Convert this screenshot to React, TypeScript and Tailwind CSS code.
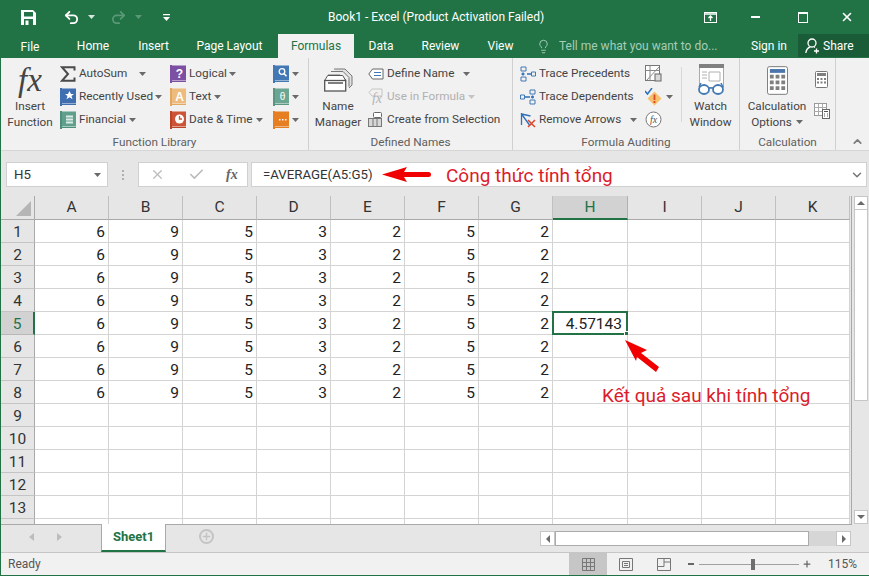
import { Undo2, Redo2, Lightbulb, X, Check, ChevronDown, ChevronUp, Plus } from "lucide-react"

function Caret({ dim = false }: { dim?: boolean }) {
  return (
    <svg width="7" height="4" viewBox="0 0 7 4" className="shrink-0">
      <path d="M0 0h7L3.5 4z" fill={dim ? "#c4c4c4" : "#6a6a6a"} />
    </svg>
  )
}

function Book({ color, spine, children }: { color: string; spine: string; children?: React.ReactNode }) {
  return (
    <svg width="16" height="18" viewBox="0 0 16 18" className="shrink-0">
      <rect x="0" y="0" width="2" height="18" fill={spine} />
      <rect x="2" y="0.5" width="14" height="15" fill={color} />
      <rect x="2" y="16" width="14" height="1" fill={spine} />
      {children}
    </svg>
  )
}

function Sigma() {
  return (
    <svg width="16" height="16" viewBox="0 0 16 16" className="shrink-0">
      <path d="M14.500 4.500V1.200H2L8 8 2 14.800h12.500v-3.300" fill="none" stroke="#4a4a4a" strokeWidth="2" />
    </svg>
  )
}

function RibbonRow({ icon, label, caret, gap, disabled }: { icon: React.ReactNode; label: string; caret?: boolean; gap?: string; disabled?: boolean }) {
  return (
    <div className="flex h-[23px] items-center">
      <div className="flex w-[19px] shrink-0 justify-start">{icon}</div>
      <span className={disabled ? "whitespace-nowrap text-[#b0b0b0]" : "whitespace-nowrap text-[#444]"}>{label}</span>
      {caret && <span className={gap ?? "ml-[3px]"}><Caret dim={disabled} /></span>}
    </div>
  )
}

function LargeButton({ icon, lines, width }: { icon: React.ReactNode; lines: React.ReactNode[]; width: string }) {
  return (
    <div className={"flex flex-col items-center leading-[16px] text-[#444] " + width}>
      <div className="flex h-[39px] items-center justify-center">{icon}</div>
      {lines.map((l, i) => (
        <span key={i} className="flex items-center gap-[4px] whitespace-nowrap">{l}</span>
      ))}
    </div>
  )
}

function GroupLabel({ children }: { children: string }) {
  return <div className="h-[20px] pt-[3px] text-center text-[11.750px] leading-[18px] text-[#5f5f5f]">{children}</div>
}

function Ribbon() {
  return (
    <div className="flex h-[93px] border-b border-[#d6d6d6] bg-[#f1f1f1] text-[11.750px]">
      {/* Function Library */}
      <div className="flex w-[308px] flex-col border-r border-[#d0d0d0]">
        <div className="flex h-[72px] pt-[4px]">
          <LargeButton
            width="w-[58px]"
            icon={<span className="font-['Liberation_Serif',serif] text-[33px] italic leading-[34px] text-[#444]">fx</span>}
            lines={["Insert", "Function"]}
          />
          <div className="w-[111px] pl-[1px]">
            <RibbonRow icon={<Sigma />} label="AutoSum" caret gap="ml-[12px]" />
            <RibbonRow
              icon={
                <Book color="#3f6fb0" spine="#3f6fb0">
                  <path d="M9.500 3l1.500 3h3l-2.500 2 1 3.200-3-2-3 2 1-3.200-2.500-2h3z" fill="#fff" />
                </Book>
              }
              label="Recently Used"
              caret
              gap="ml-[2px]"
            />
            <RibbonRow
              icon={
                <Book color="#5f9f8c" spine="#4e8f7c">
                  <path d="M6 4.500h7v2H6zM6 7.500h7v2H6zM6 10.500h7v2H6z" fill="#dcebe6" />
                </Book>
              }
              label="Financial"
              caret
            />
          </div>
          <div className="w-[103px]">
            <RibbonRow
              icon={
                <Book color="#7d4fa3" spine="#7d4fa3">
                  <text x="9.500" y="13" textAnchor="middle" fontSize="12" fontWeight="700" fill="#fff" fontFamily="Liberation Sans">?</text>
                </Book>
              }
              label="Logical"
              caret
              gap="ml-[2px]"
            />
            <RibbonRow
              icon={
                <Book color="#eebb7c" spine="#e2a85f">
                  <text x="9.500" y="13" textAnchor="middle" fontSize="12" fontWeight="700" fill="#fff" fontFamily="Liberation Sans">A</text>
                </Book>
              }
              label="Text"
              caret
            />
            <RibbonRow
              icon={
                <Book color="#cc5335" spine="#bb4528">
                  <circle cx="9.500" cy="8" r="4.500" fill="#fff" />
                  <path d="M9.500 5v3h2.500" fill="none" stroke="#cc5335" strokeWidth="1.300" />
                </Book>
              }
              label="Date & Time"
              caret
            />
          </div>
          <div className="w-[35px]">
            <div className="flex h-[23px] items-center gap-[3px]">
              <Book color="#4279b5" spine="#4279b5">
                <circle cx="9" cy="6.500" r="2.800" fill="none" stroke="#fff" strokeWidth="1.300" />
                <path d="M11 8.500l2.500 2.800" stroke="#fff" strokeWidth="1.500" />
              </Book>
              <Caret />
            </div>
            <div className="flex h-[23px] items-center gap-[3px]">
              <Book color="#6ba692" spine="#5a9680">
                <text x="9.500" y="12" textAnchor="middle" fontSize="10" fill="#fff" fontFamily="Liberation Sans">θ</text>
              </Book>
              <Caret />
            </div>
            <div className="flex h-[23px] items-center gap-[3px]">
              <Book color="#e67e22" spine="#e67e22">
                <path d="M6 8h1.500v1.500H6zM9 8h1.500v1.500H9zM12 8h1.500v1.500H12z" fill="#fff" />
              </Book>
              <Caret />
            </div>
          </div>
        </div>
        <GroupLabel>Function Library</GroupLabel>
      </div>

      {/* Defined Names */}
      <div className="flex w-[204px] flex-col border-r border-[#d0d0d0]">
        <div className="flex h-[72px] pt-[4px]">
          <LargeButton
            width="w-[58px]"
            icon={
              <svg width="29" height="24" viewBox="0 0 29 24">
                <path d="M10 1h11l7 7v9l-3 3" fill="#e2e2e2" stroke="#777" />
                <path d="M7 3.500h12l6 6v9" fill="#eeeeee" stroke="#777" />
                <path d="M4 7h12l6 5" fill="#f6f6f6" stroke="#777" />
                <path d="M.700 12.500l3-5h15l3 5" fill="#fff" stroke="#555" />
                <rect x=".700" y="12.500" width="21" height="10.500" fill="#fff" stroke="#555" strokeWidth="1.300" />
                <path d="M4 15h15" stroke="#555" strokeWidth="1.500" />
              </svg>
            }
            lines={["Name", "Manager"]}
          />
          <div className="pl-[1px]">
            <RibbonRow
              icon={
                <svg width="16" height="12" viewBox="0 0 16 12">
                  <path d="M4.500 1h10.500v10H4.500L.800 6z" fill="#fff" stroke="#666" />
                  <path d="M6 4.500h7M6 7.500h7" stroke="#4279b5" />
                </svg>
              }
              label="Define Name"
              caret
              gap="ml-[9px]"
            />
            <RibbonRow
              icon={
                <svg width="16" height="17" viewBox="0 0 16 17">
                  <path d="M4 1h10v7H4L1 4.500z" fill="none" stroke="#c6c6c6" />
                  <text x="9" y="15" textAnchor="middle" fontSize="14" fontStyle="italic" fill="#b4b4b4" fontFamily="Liberation Serif">fx</text>
                </svg>
              }
              label="Use in Formula"
              caret
              disabled
            />
            <RibbonRow
              icon={
                <svg width="15" height="15" viewBox="0 0 15 15">
                  <rect x=".500" y="6.500" width="13" height="8" fill="#d7d7d7" stroke="#777" />
                  <path d="M5 6.500v8M9 6.500v8" stroke="#777" />
                  <rect x="5.500" y=".500" width="8" height="5" rx="1" fill="#fff" stroke="#666" />
                </svg>
              }
              label="Create from Selection"
            />
          </div>
        </div>
        <GroupLabel>Defined Names</GroupLabel>
      </div>

      {/* Formula Auditing */}
      <div className="flex w-[227px] flex-col border-r border-[#d0d0d0]">
        <div className="flex h-[72px] pt-[4px]">
          <div className="w-[132px] pl-[7px]">
            <RibbonRow
              icon={
                <svg width="16" height="16" viewBox="0 0 16 16">
                  <path d="M1 1h5v4H1zM1 11h5v4H1zM11.500 6h4v4h-4z" fill="none" stroke="#4279b5" />
                  <path d="M1.500 8h3M3 6.500v3M7 8h4" stroke="#2d6fb8" strokeWidth="1.500" />
                </svg>
              }
              label="Trace Precedents"
            />
            <RibbonRow
              icon={
                <svg width="16" height="16" viewBox="0 0 16 16">
                  <path d="M10 1h5v4h-5zM10 11h5v4h-5zM.500 6h4v4h-4z" fill="none" stroke="#4279b5" />
                  <path d="M11 8h3M12.500 6.500v3M5 8h5" stroke="#2d6fb8" strokeWidth="1.500" />
                </svg>
              }
              label="Trace Dependents"
            />
            <RibbonRow
              icon={
                <svg width="16" height="16" viewBox="0 0 16 16">
                  <path d="M1.500 1v12M1.500 2l9 2M1.500 2l8 11" fill="none" stroke="#2d6fb8" strokeWidth="1.300" />
                  <path d="M8 8l7 7M15 8l-7 7" stroke="#d9472b" strokeWidth="1.500" />
                </svg>
              }
              label="Remove Arrows"
              caret
              gap="ml-[9px]"
            />
          </div>
          <div className="w-[36px]">
            <div className="flex h-[23px] items-center">
              <svg width="17" height="17" viewBox="0 0 17 17">
                <rect x=".500" y=".500" width="14" height="15" fill="#fff" stroke="#777" />
                <path d="M.500 5.500h14M5 .500v15M14 2L2 15" stroke="#888" />
                <rect x="10" y="9" width="6" height="7" fill="#d9d9d9" stroke="#666" />
              </svg>
            </div>
            <div className="flex h-[23px] items-center gap-[4px]">
              <svg width="17" height="18" viewBox="0 0 17 18">
                <path d="M0 3l2.500 3L7 0" fill="none" stroke="#2d6fb8" strokeWidth="1.500" />
                <path d="M9.500 3.500L16.500 10.500 9.500 17.500 2.500 10.500z" fill="#f5c26b" />
                <path d="M9.500 6.500v5.500M9.500 13v2" stroke="#d9472b" strokeWidth="1.800" />
              </svg>
              <Caret />
            </div>
            <div className="flex h-[23px] items-center">
              <svg width="17" height="17" viewBox="0 0 17 17">
                <circle cx="8.500" cy="8.500" r="7.500" fill="#fff" stroke="#777" />
                <text x="8.500" y="12" textAnchor="middle" fontSize="10" fontStyle="italic" fill="#555" fontFamily="Liberation Serif">fx</text>
              </svg>
            </div>
          </div>
          <div className="mt-[5px] h-[55px] w-px bg-[#d8d8d8]" />
          <LargeButton
            width="w-[57px]"
            icon={
              <svg width="30" height="32" viewBox="0 0 30 32">
                <rect x="3.500" y=".500" width="24" height="23" fill="#fff" stroke="#aaa" />
                <rect x="3" y="0" width="25" height="4" fill="#808080" />
                <path d="M13 8h11v9H13zM6 8h5M6 11h5M6 14h5" fill="none" stroke="#b0b0b0" />
                <ellipse cx="8" cy="25.500" rx="5" ry="4.500" fill="#fff" stroke="#4279b5" strokeWidth="1.800" />
                <ellipse cx="22" cy="25.500" rx="5" ry="4.500" fill="#fff" stroke="#4279b5" strokeWidth="1.800" />
                <path d="M13 24h4M3 23l2-4M27 23l-2-4" stroke="#4279b5" strokeWidth="1.500" />
              </svg>
            }
            lines={["Watch", "Window"]}
          />
        </div>
        <GroupLabel>Formula Auditing</GroupLabel>
      </div>

      {/* Calculation */}
      <div className="flex w-[96px] flex-col border-r border-[#d0d0d0]">
        <div className="flex h-[72px] pt-[4px]">
          <LargeButton
            width="w-[74px]"
            icon={
              <svg width="21" height="29" viewBox="0 0 22 30">
                <rect x=".500" y=".500" width="21" height="29" rx="2" fill="#fff" stroke="#777" />
                <rect x="3" y="3" width="16" height="4" fill="#4a76ab" />
                <path d="M3 9h4v4H3zM9 9h4v4H9zM15 9h4v4h-4zM3 15h4v4H3zM9 15h4v4H9zM15 15h4v4h-4zM3 21h4v4H3zM9 21h4v4H9zM15 21h4v4h-4z" fill="#7f7f7f" />
              </svg>
            }
            lines={["Calculation", <>Options <Caret /></>]}
          />
          <div className="flex flex-col items-start pt-[9px]">
            <svg width="13" height="17" viewBox="0 0 13 17" className="ml-[1px]">
              <rect x=".500" y=".500" width="12" height="16" rx="1" fill="#fff" stroke="#777" />
              <rect x="2" y="2" width="9" height="3" fill="#7f7f7f" />
              <path d="M2 7h2v2H2zM5.500 7h2v2h-2zM9 7h2v2H9zM2 10.500h2v2H2zM5.500 10.500h2v2h-2zM9 10.500h2v2H9z" fill="#7f7f7f" />
            </svg>
            <svg width="16" height="16" viewBox="0 0 16 16" className="mt-[15px]">
              <rect x=".500" y=".500" width="12" height="12" fill="#fff" stroke="#999" />
              <path d="M.500 4.500h12M.500 8.500h12M4.500.500v12M8.500.500v12" stroke="#aaa" />
              <rect x="8.500" y="6.500" width="7" height="9" fill="#fff" stroke="#666" />
              <path d="M10 8.500h4M10 11h1M13 11h1M10 13h1M13 13h1" stroke="#555" />
            </svg>
          </div>
        </div>
        <GroupLabel>Calculation</GroupLabel>
      </div>

      <div className="flex flex-1 items-end justify-center pb-[2px] pl-[10px]">
        <ChevronUp size={13} strokeWidth={3} className="text-[#7a7a7a]" />
      </div>
    </div>
  )
}

const columns = ["A", "B", "C", "D", "E", "F", "G", "H", "I", "J", "K"]
const values = [6, 9, 5, 3, 2, 5, 2]
const rows = Array.from({ length: 14 }, (_, i) => i + 1)

function Sheet() {
  return (
    <div className="grid grid-cols-[34px_repeat(7,74px)_75px_repeat(3,74px)] grid-rows-[24px] auto-rows-[23px] text-[15.500px] leading-[24px] text-[#222]">
      <div className="relative border-r border-b border-[#a9a9a9] bg-[#e6e6e6]">
        <div className="absolute bottom-[3px] right-[3px] h-0 w-0 border-b-[15px] border-l-[15px] border-b-[#b5b5b5] border-l-transparent" />
      </div>
      {columns.map((c) => (
        <div
          key={c}
          className={
            c === "H"
              ? "border-r border-b-2 border-r-[#b0b0b0] border-b-[#217346] bg-[#d2d2d2] text-center leading-[22px] text-[#217346]"
              : "border-r border-b border-r-[#c0c0c0] border-b-[#a9a9a9] bg-[#e6e6e6] text-center leading-[22px] text-[#333]"
          }
        >
          {c}
        </div>
      ))}
      {rows.map((r) => (
        <Row key={r} r={r} />
      ))}
    </div>
  )
}

function Row({ r }: { r: number }) {
  return (
    <>
      <div
        className={
          r === 5
            ? "border-r-2 border-b border-r-[#217346] border-b-[#b8b8b8] bg-[#d2d2d2] text-center text-[#217346]"
            : "border-r border-b border-r-[#a9a9a9] border-b-[#c4c4c4] bg-[#e6e6e6] text-center text-[#333]"
        }
      >
        {r < 14 ? r : ""}
      </div>
      {columns.map((c, i) => (
        <div key={c} className="relative border-r border-b border-[#d4d4d4] bg-white pr-[3px] text-right">
          {r <= 8 && i < 7 ? values[i] : ""}
          {r === 5 && c === "H" && (
            <>
              <span className="pr-[2px]">4.57143</span>
              <div className="absolute -left-px -top-px -right-px -bottom-px border-2 border-[#217346]" />
              <div className="absolute -bottom-[4px] -right-[4px] h-[7px] w-[7px] border border-white bg-[#217346]" />
            </>
          )}
        </div>
      ))}
    </>
  )
}

function ScrollButton({ children, className }: { children: React.ReactNode; className: string }) {
  return <div className={"flex items-center justify-center border bg-white " + className}>{children}</div>
}

export default function App() {
  return (
    <div className="relative flex h-[576px] w-[869px] flex-col overflow-hidden bg-white font-['Roboto','Noto_Sans',sans-serif]">
      {/* title bar */}
      <div className="flex h-[34px] items-center bg-[#217346] text-white">
        <div className="flex w-[328px] items-center">
          <svg width="15" height="15" viewBox="0 0 15 15" className="ml-[21px]">
            <path d="M0 0h12l3 3v12H0z" fill="#fff" />
            <rect x="3" y="2" width="9" height="4.500" fill="#217346" />
            <rect x="3" y="9" width="9" height="6" fill="#217346" />
            <rect x="4.500" y="10.500" width="3" height="4.500" fill="#fff" />
          </svg>
          <Undo2 size={17} strokeWidth={2.6} className="ml-[27px]" />
          <svg width="7" height="4" viewBox="0 0 7 4" className="ml-[8px]"><path d="M0 0h7L3.500 4z" fill="#d8e8df" /></svg>
          <Redo2 size={17} strokeWidth={2.4} className="ml-[15px] text-[#5b9877]" />
          <svg width="7" height="4" viewBox="0 0 7 4" className="ml-[8px]"><path d="M0 0h7L3.500 4z" fill="#5b9877" /></svg>
          <svg width="7" height="7" viewBox="0 0 7 7" className="ml-[21px]"><path d="M0 0h7v1.300H0zM0 3h7L3.500 7z" fill="#fff" /></svg>
        </div>
        <div className="w-[216px] whitespace-nowrap text-center text-[12px]">Book1 - Excel (Product Activation Failed)</div>
        <div className="ml-[160px] flex items-center">
          <svg width="13" height="11" viewBox="0 0 13 11">
            <rect x=".500" y=".500" width="12" height="10" fill="none" stroke="#fff" />
            <path d="M1 2h11" stroke="#fff" strokeWidth="1.500" />
            <path d="M6.500 9V4M4.500 6l2-2 2 2" fill="none" stroke="#fff" strokeWidth="1.300" />
          </svg>
          <div className="ml-[34px] h-[2px] w-[9px] bg-white" />
          <div className="ml-[38px] h-[11px] w-[10px] border border-t-2 border-white" />
          <X size={14} strokeWidth={2.8} className="ml-[32px]" />
        </div>
      </div>

      {/* tab row */}
      <div className="flex h-[24px] bg-[#217346] text-[12px] text-white">
        <div className="flex w-[60px] items-center justify-center pt-[1px]">File</div>
        <div className="flex w-[66px] items-center justify-center">Home</div>
        <div className="flex w-[55px] items-center justify-center">Insert</div>
        <div className="flex w-[97px] items-center justify-center">Page Layout</div>
        <div className="flex w-[76px] items-center justify-center bg-[#f1f1f1] text-[#217346]">Formulas</div>
        <div className="flex w-[54px] items-center justify-center">Data</div>
        <div className="flex w-[65px] items-center justify-center">Review</div>
        <div className="flex w-[55px] items-center justify-center">View</div>
        <div className="flex w-[223px] items-center pl-[8px] text-[#a6cdb7]">
          <Lightbulb size={15} strokeWidth={1.5} className="mr-[8px]" />
          <span className="whitespace-nowrap">Tell me what you want to do...</span>
        </div>
        <div className="flex w-[47px] items-center justify-start">Sign in</div>
        <div className="flex h-[23px] flex-1 items-center gap-[2px] bg-[#1a5c38] pl-[7px]">
          <svg width="16" height="16" viewBox="0 0 16 16">
            <circle cx="7" cy="5" r="4" fill="none" stroke="#fff" strokeWidth="1.300" />
            <path d="M.800 15c.5-3.500 2.500-5.500 4.500-6M9 8.800l1 .5" fill="none" stroke="#fff" strokeWidth="1.300" />
            <path d="M11.500 10.500v5M9 13h5" stroke="#fff" strokeWidth="1.300" />
          </svg>
          Share
        </div>
      </div>

      {/* body with the green window edge on the left */}
      <div className="flex flex-1 flex-col border-l border-[#217346]">
        <Ribbon />

        {/* formula bar */}
        <div className="flex h-[45px] items-start bg-[#e6e6e6] pl-[5px] pt-[11px] text-[13.250px] text-[#333]">
          <div className="flex h-[25px] w-[102px] items-center justify-between border border-[#d0d0d0] bg-white pl-[7px] pr-[6px]">
            H5
            <Caret />
          </div>
          <div className="flex h-[25px] w-[30px] items-center justify-center">
            <div className="h-[10px] border-l-2 border-dotted border-[#b0b0b0]" />
          </div>
          <div className="flex h-[25px] w-[110px] items-center border border-[#d0d0d0] bg-white pl-[11px] text-[#bcbcbc]">
            <X size={15} strokeWidth={2} />
            <Check size={17} strokeWidth={2.4} className="ml-[23px]" />
            <span className="ml-[21px] font-['Liberation_Serif',serif] text-[14px] font-bold italic text-[#666]">fx</span>
          </div>
          <div className="ml-[3px] flex h-[25px] w-[616px] items-center justify-between border border-[#d0d0d0] bg-white pl-[11px] pr-[2px]">
            =AVERAGE(A5:G5)
            <ChevronDown size={14} strokeWidth={2.6} className="text-[#777]" />
          </div>
        </div>

        {/* sheet + vertical scrollbar */}
        <div className="flex h-[329px] bg-[#e6e6e6]">
          <div className="h-[329px] w-[851px] shrink-0 overflow-hidden border-r border-b border-[#a9a9a9]">
            <Sheet />
          </div>
          <div className="ml-[2px] flex w-[14px] flex-col">
            <ScrollButton className="h-[14px] border-[#c6c6c6]">
              <svg width="8" height="4" viewBox="0 0 8 4"><path d="M4 0l4 4H0z" fill="#6a6a6a" /></svg>
            </ScrollButton>
            <div className="h-[191px] border border-t-0 border-[#c6c6c6] bg-white" />
            <div className="flex-1" />
            <ScrollButton className="mb-[1px] h-[14px] border-[#c6c6c6]">
              <svg width="8" height="4" viewBox="0 0 8 4"><path d="M0 0h8L4 4z" fill="#6a6a6a" /></svg>
            </ScrollButton>
          </div>
        </div>

        {/* sheet tabs + horizontal scrollbar */}
        <div className="flex h-[27px] bg-[#e6e6e6]">
          <div className="flex w-[100px] items-center pb-[4px]">
            <svg width="5" height="8" viewBox="0 0 5 8" className="ml-[28px]"><path d="M5 0v8L0 4z" fill="#bcbcbc" /></svg>
            <svg width="5" height="8" viewBox="0 0 5 8" className="ml-[23px]"><path d="M0 0v8l5-4z" fill="#bcbcbc" /></svg>
          </div>
          <div className="-mt-px flex h-[28px] w-[65px] items-center justify-center border-x border-b-2 border-x-[#a9a9a9] border-b-[#217346] bg-white text-[13px] font-bold text-[#217346]">
            Sheet1
          </div>
          <div className="flex w-[374px] items-center pb-[4px] pl-[33px]">
            <div className="flex h-[15px] w-[15px] items-center justify-center rounded-full border-2 border-[#c4c4c4]">
              <Plus size={11} strokeWidth={3} className="text-[#c4c4c4]" />
            </div>
          </div>
          <div className="mt-[6px] flex h-[15px] w-[311px] bg-[#d6d6d6]">
            <ScrollButton className="w-[15px] border-[#c6c6c6]">
              <svg width="4" height="8" viewBox="0 0 4 8"><path d="M4 0v8L0 4z" fill="#6a6a6a" /></svg>
            </ScrollButton>
            <div className="w-[254px] border border-[#ababab] bg-white" />
            <div className="flex-1" />
            <ScrollButton className="w-[15px] border-[#c6c6c6]">
              <svg width="4" height="8" viewBox="0 0 4 8"><path d="M0 0v8l4-4z" fill="#6a6a6a" /></svg>
            </ScrollButton>
          </div>
        </div>

        {/* status bar */}
        <div className="flex h-[23px] items-center border-t border-[#c6c6c6] bg-[#f1f1f1] text-[12px] text-[#555]">
          <span className="w-[568px] pl-[7px]">Ready</span>
          <div className="flex h-full w-[38px] items-center justify-center bg-[#c6c6c6]">
            <svg width="13" height="13" viewBox="0 0 13 13">
              <path d="M.500.500h12v12H.500zM4.500.500v12M8.500.500v12M.500 4.500h12M.500 8.500h12" fill="none" stroke="#777" />
            </svg>
          </div>
          <svg width="14" height="13" viewBox="0 0 14 13" className="ml-[12px]">
            <path d="M.500.500h13v12H.500z" fill="none" stroke="#777" />
            <path d="M3.500 3.500h7v6h-7zM5 5.500h4M5 7.500h4" fill="none" stroke="#777" />
          </svg>
          <svg width="14" height="13" viewBox="0 0 14 13" className="ml-[24px]">
            <path d="M.500.500h13v12H.500zM.500 8.500h6.500V.500M7 4h6.500" fill="none" stroke="#777" />
          </svg>
          <div className="ml-[17px] h-[2px] w-[6px] bg-[#666]" />
          <div className="relative ml-[5px] h-px w-[100px] bg-[#a0a0a0]">
            <div className="absolute -top-[5px] left-[52px] h-[11px] w-[4px] bg-[#6e6e6e]" />
          </div>
          <Plus size={10} strokeWidth={3} className="ml-[3px] text-[#666]" />
          <span className="ml-[16px]">115%</span>
        </div>
        <div className="h-px bg-[#217346]" />
      </div>

      {/* annotations laid over the screenshot */}
      <svg width="869" height="576" viewBox="0 0 869 576" className="pointer-events-none absolute left-0 top-0">
        <path d="M382 174.500L407 167l-3 5h24.500a2.500 2.500 0 010 5H404l3 5z" fill="#f00000" />
        <path d="M625 340l22 10-6 3 18 14-3 5-19-15-1 4z" fill="#f00000" />
      </svg>
      <span className="absolute left-[446px] top-[162px] whitespace-nowrap text-[19px] text-[#dc1c2a]">Công thức tính tổng</span>
      <span className="absolute left-[602px] top-[382px] whitespace-nowrap text-[19px] text-[#dc1c2a]">Kết quả sau khi tính tổng</span>
    </div>
  )
}
